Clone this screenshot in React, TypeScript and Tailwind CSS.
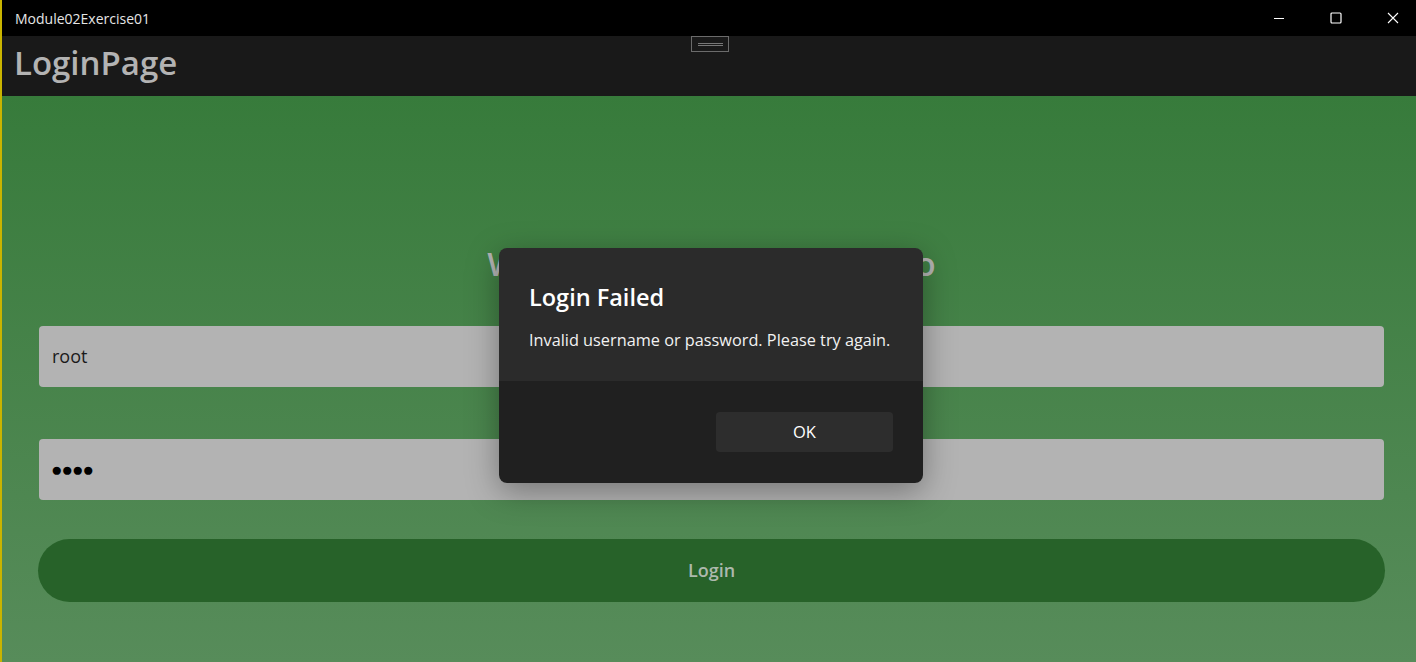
import React from 'react';

const font = { fontFamily: '"Open Sans", "Noto Sans", sans-serif' };

function WindowControls() {
  return (
    <div className="flex h-full items-center gap-[11px]">
      <button className="flex h-9 w-[46px] items-center justify-center text-white">
        <svg width="12" height="12" viewBox="0 0 12 12">
          <path d="M1 6.5h10" stroke="currentColor" strokeWidth="1" />
        </svg>
      </button>
      <button className="flex h-9 w-[46px] items-center justify-center text-white">
        <svg width="12" height="12" viewBox="0 0 12 12">
          <rect x="1" y="1" width="10" height="10" rx="1" fill="none" stroke="currentColor" strokeWidth="1.2" />
        </svg>
      </button>
      <button className="flex h-9 w-[46px] items-center justify-center text-white">
        <svg width="12" height="12" viewBox="0 0 12 12">
          <path d="M1 1l10 10M11 1L1 11" stroke="currentColor" strokeWidth="1.1" />
        </svg>
      </button>
    </div>
  );
}

function ErrorDialog() {
  return (
    <div className="absolute left-[497px] top-[248px] w-[424px] overflow-hidden rounded-lg shadow-[0_8px_32px_rgba(0,0,0,0.35)]">
      <div className="bg-[#2b2b2b] px-[30px] pt-[33px] pb-[29px]">
        <h2 className="text-[23.5px] font-semibold leading-8 text-white">Login Failed</h2>
        <p className="mt-[15px] whitespace-nowrap text-[16.3px] leading-6 text-[#f2f2f2]">
          Invalid username or password. Please try again.
        </p>
      </div>
      <div className="flex justify-end bg-[#202020] px-[30px] pt-[31px] pb-[31px]">
        <button className="h-10 w-[177px] rounded-[4px] bg-[#2d2d2d] text-[16.5px] text-white">
          OK
        </button>
      </div>
    </div>
  );
}

export default function App() {
  return (
    <div className="relative flex h-[662px] w-[1416px] overflow-hidden border-l-2 border-[#c9b400]" style={font}>
      <div className="flex flex-1 flex-col">
        <div className="flex h-9 items-center justify-between bg-black pl-[13px]">
          <span className="text-[14px] text-[#e6e6e6]">Module02Exercise01</span>
          <WindowControls />
        </div>

        <div className="relative flex h-[60px] items-start bg-[#191919] px-3 pt-[10px]">
          <span className="text-[33px] font-semibold leading-none text-[#b3b3b3]">LoginPage</span>
          <div className="absolute left-[689px] top-0 flex h-4 w-[38px] flex-col items-center justify-center gap-px border border-[#6b6b6b]">
            <div className="h-px w-[25px] bg-[#777]" />
            <div className="h-px w-[25px] bg-[#777]" />
          </div>
        </div>

        <div className="flex flex-1 flex-col bg-gradient-to-b from-[#377b3b] to-[#578c5a] pl-[37px] pr-[32px] pt-[139px]">
          <h1 className="text-center text-[33px] font-semibold leading-[58px] text-[#b4b4b4]">
            Welcome to the Login Demo
          </h1>
          <div className="mt-[33px] flex h-[61px] items-center rounded-[4px] bg-[#b3b3b3] px-[13px] text-[18px] text-[#1a1a1a]">
            root
          </div>
          <div className="mt-[52px] flex h-[61px] items-center rounded-[4px] bg-[#b3b3b3] px-[12px] text-[19px] tracking-[-1px] text-black">
            ●●●●
          </div>
          <button className="-mx-px mt-[39px] h-[63px] rounded-full bg-[#276229] text-[18px] font-semibold text-[#adb9ad]">
            Login
          </button>
        </div>
      </div>

      <ErrorDialog />
    </div>
  );
}
